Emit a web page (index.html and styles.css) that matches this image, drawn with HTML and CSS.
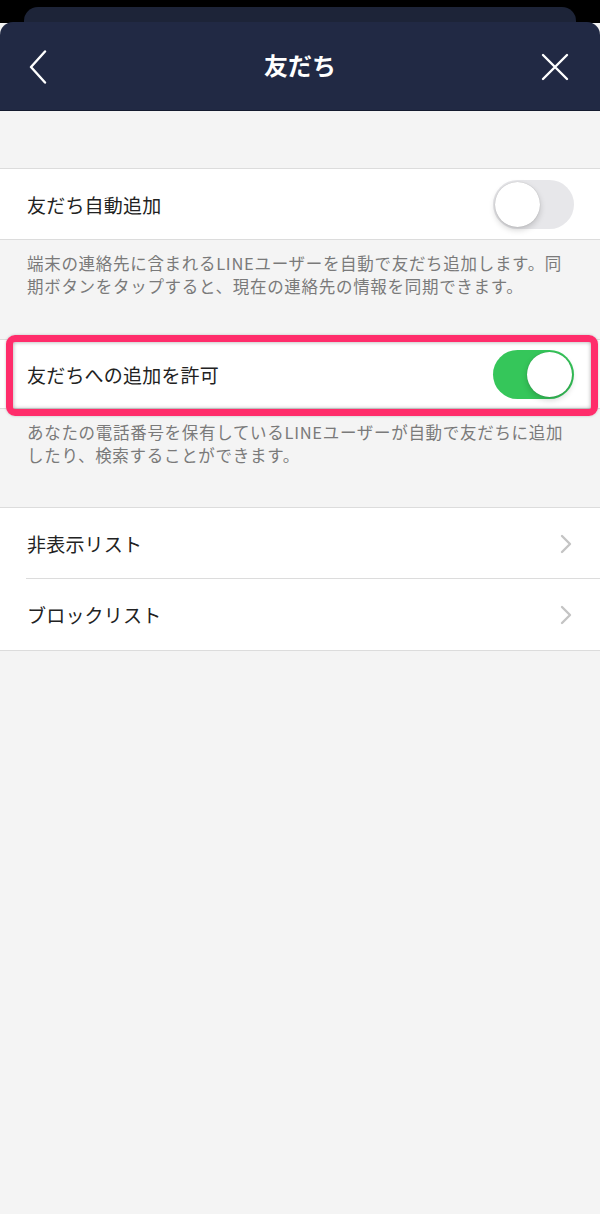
FILE: index.html
```html
<!DOCTYPE html>
<html lang="ja">
<head>
<meta charset="utf-8">
<link rel="stylesheet" href="styles.css">
</head>
<body>
<div class="top">
  <div class="back-card"></div>
</div>
<header class="header">
  <svg class="icon-back" width="20" height="34" viewBox="0 0 20 34"><path d="M17 1.5 L3 17 L17 32.5" fill="none" stroke="#fff" stroke-width="2.4" stroke-linecap="round" stroke-linejoin="round"/></svg>
  <h1 class="title">友だち</h1>
  <svg class="icon-close" width="28" height="28" viewBox="0 0 28 28"><path d="M2 2 L26 26 M26 2 L2 26" fill="none" stroke="#fff" stroke-width="2.4" stroke-linecap="round"/></svg>
</header>
<main class="content">
  <div class="spacer"></div>
  <div class="row">
    <span class="label">友だち自動追加</span>
    <span class="toggle"><span class="knob"></span></span>
  </div>
  <p class="desc">端末の連絡先に含まれるLINEユーザーを自動で友だち追加します。同期ボタンをタップすると、現在の連絡先の情報を同期できます。</p>
  <div class="row highlighted">
    <span class="label">友だちへの追加を許可</span>
    <span class="toggle on"><span class="knob"></span></span>
  </div>
  <p class="desc desc-last">あなたの電話番号を保有しているLINEユーザーが自動で友だちに追加したり、検索することができます。</p>
  <div class="list">
    <div class="row link">
      <span class="label">非表示リスト</span>
      <svg class="chev" width="12" height="20" viewBox="0 0 12 20"><path d="M2 2 L10 10 L2 18" fill="none" stroke="#c4c4c4" stroke-width="2.4" stroke-linecap="round" stroke-linejoin="round"/></svg>
    </div>
    <div class="row link">
      <span class="label">ブロックリスト</span>
      <svg class="chev" width="12" height="20" viewBox="0 0 12 20"><path d="M2 2 L10 10 L2 18" fill="none" stroke="#c4c4c4" stroke-width="2.4" stroke-linecap="round" stroke-linejoin="round"/></svg>
    </div>
  </div>
</main>
</body>
</html>
```
FILE: styles.css
```css
html, body {
  margin: 0;
  padding: 0;
  background: #f4f4f4;
  font-family: "Noto Sans CJK JP", "Noto Sans", sans-serif;
}
body {
  width: 600px;
  min-height: 1214px;
  display: flex;
  flex-direction: column;
}
.top {
  background: #000;
  height: 23px;
  display: flex;
  align-items: flex-end;
  padding: 0 24px;
}
.back-card {
  flex: 1;
  height: 16px;
  background: #1d2438;
  border-radius: 14px 14px 0 0;
}
.header {
  background: #212944;
  height: 89px;
  border-radius: 13px 13px 0 0;
  margin-top: -1px;
  border-bottom: 1px solid #141a2e;
  display: flex;
  align-items: center;
  justify-content: space-between;
  padding: 0 31px 0 28px;
  box-sizing: border-box;
  position: relative;
}
.icon-back { margin-top: 2px; }
.icon-close { margin-top: 2px; }
.title {
  margin: 0;
  color: #fff;
  font-size: 24px;
  font-weight: 700;
  position: absolute;
  left: 0;
  right: 0;
  text-align: center;
  top: 26px;
  line-height: 34px;
  pointer-events: none;
}
.content {
  flex: 1;
  background: #f4f4f4;
}
.spacer { height: 57px; }
.row {
  background: #fff;
  border-top: 1px solid #dcdcdc;
  border-bottom: 1px solid #dcdcdc;
  box-sizing: border-box;
  height: 72px;
  display: flex;
  align-items: center;
  justify-content: space-between;
  padding: 0 26px 0 27px;
}
.label {
  font-size: 19px;
  color: #222;
  letter-spacing: 0.2px;
}
.toggle {
  width: 81px;
  height: 49px;
  border-radius: 25px;
  background: #e7e7ea;
  position: relative;
  box-sizing: border-box;
}
.toggle .knob {
  position: absolute;
  left: 2px;
  top: 2px;
  width: 45px;
  height: 45px;
  border-radius: 50%;
  background: #fff;
  box-shadow: 0 3px 6px rgba(0,0,0,0.18), 0 0 1px rgba(0,0,0,0.25);
}
.toggle.on {
  background: #35c65a;
}
.toggle.on .knob {
  left: 34px;
}
.desc {
  margin: 0;
  height: 99px;
  box-sizing: border-box;
  padding: 12px 22px 0 27px;
  font-size: 16.5px;
  line-height: 23px;
  color: #7a7a7a;
  letter-spacing: 0.7px;
}
.desc-last { height: 98px; }
.highlighted {
  position: relative;
  height: 70px;
}
.highlighted::after {
  content: "";
  position: absolute;
  left: 6px;
  right: 2px;
  top: -5px;
  bottom: -8px;
  border: 7px solid #ff2d6b;
  border-radius: 9px;
  box-shadow: inset 0 0 4px rgba(0,0,0,0.35), 0 0 3px rgba(0,0,0,0.2);
}
.list .row.link + .row.link {
  border-top: none;
}
.list .row.link:first-child {
  border-bottom: none;
  position: relative;
  height: 72px;
}
.list .row.link:first-child::after {
  content: "";
  position: absolute;
  left: 26px;
  right: 0;
  bottom: 0;
  height: 1px;
  background: #dcdcdc;
}
.chev { margin-right: 2px; }
```
